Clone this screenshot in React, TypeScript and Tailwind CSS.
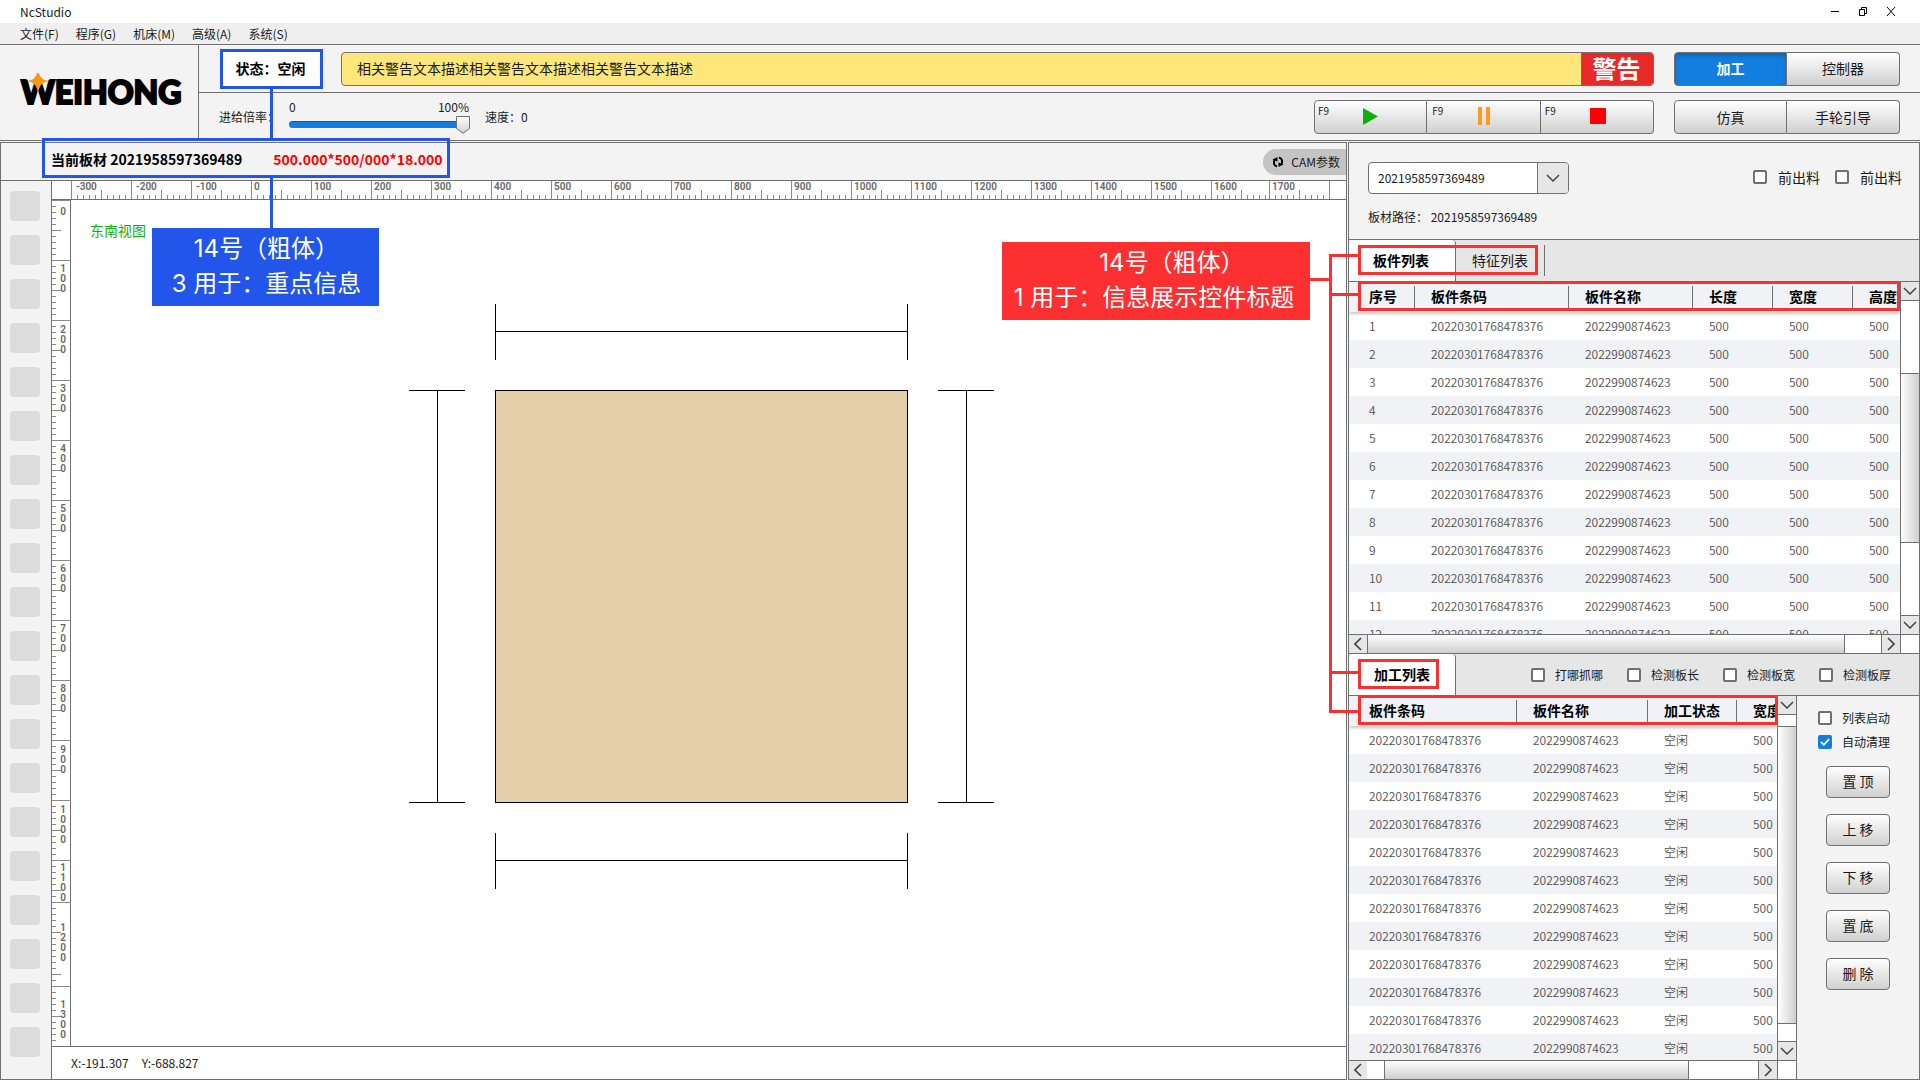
import React from "react";

const LINE = "border-[#707070]";

function Chevron({ dir }: { dir: "down" | "left" | "right" }) {
  if (dir === "down") {
    return (
      <svg width="14" height="8" viewBox="0 0 14 8" fill="none" stroke="#444" strokeWidth="1.5">
        <path d="M1 1l6 6 6-6" />
      </svg>
    );
  }
  return (
    <svg width="8" height="14" viewBox="0 0 8 14" fill="none" stroke="#444" strokeWidth="1.7">
      <path d={dir === "left" ? "M7 1L1 7l6 6" : "M1 1l6 6-6 6"} />
    </svg>
  );
}

function Check({ label, big = false, checked = false }: { label: string; big?: boolean; checked?: boolean }) {
  return (
    <label className={big ? "flex items-center gap-[11px] text-sm leading-5" : "flex items-center gap-2.5 text-xs leading-5"}>
      <span className="relative flex size-[14px]">
        <input
          type="checkbox"
          defaultChecked={checked}
          className="peer size-[14px] appearance-none rounded-xs border-2 border-[#707070] bg-white checked:border-[#127ee0] checked:bg-[#127ee0]"
        />
        <svg viewBox="0 0 14 14" className="pointer-events-none absolute inset-0 hidden peer-checked:block" fill="none" stroke="#fff" strokeWidth="1.8">
          <path d="M3 7l2.8 2.8L11.2 4.2" />
        </svg>
      </span>
      {label}
    </label>
  );
}

function VBar({ before, thumb, after }: { before: string; thumb: string; after: string }) {
  return (
    <div className={"flex w-[19px] shrink-0 flex-col border-l bg-white " + LINE}>
      <button aria-label="向上滚动" className={"flex h-[19px] shrink-0 items-center justify-center border-b bg-[#e6e6e6] " + LINE}>
        <Chevron dir="down" />
      </button>
      <div className={before} />
      <div className={"border-y bg-linear-to-r from-white to-[#cfcfcf] " + LINE + " " + thumb} />
      <div className={after} />
      <button aria-label="向下滚动" className={"flex h-[19px] shrink-0 items-center justify-center border-t bg-[#e6e6e6] " + LINE}>
        <Chevron dir="down" />
      </button>
    </div>
  );
}

function HBar({ before, thumb, after }: { before: string; thumb: string; after: string }) {
  return (
    <div className={"flex h-[19px] shrink-0 border-t bg-white " + LINE}>
      <button aria-label="向左滚动" className="flex w-[18px] shrink-0 items-center justify-center bg-[#e6e6e6]">
        <Chevron dir="left" />
      </button>
      <div className={before} />
      <div className={"border-x bg-linear-to-b from-white to-[#cfcfcf] " + LINE + " " + thumb} />
      <div className={after} />
      <button aria-label="向右滚动" className={"flex w-[19px] shrink-0 items-center justify-center border-l bg-[#e6e6e6] " + LINE}>
        <Chevron dir="right" />
      </button>
      <div className={"w-[19px] shrink-0 border-l " + LINE} />
    </div>
  );
}

function DataTable({ heads, cols, rows }: { heads: string[]; cols: string[]; rows: string[][] }) {
  return (
    <div className="min-w-0 flex-1 overflow-hidden bg-white">
      <table className="w-full table-fixed border-collapse">
        <colgroup>
          {cols.map((c, i) => (
            <col key={i} className={c} />
          ))}
        </colgroup>
        <thead className="relative bg-[#f0f2f5] shadow-[0_2px_3px_rgba(0,0,0,0.22)]">
          <tr className="h-[30px]">
            {heads.map((h, i) => (
              <th key={h} className="overflow-visible p-0 text-left text-sm font-bold whitespace-nowrap text-black">
                <div className={i ? "h-[22px] border-l border-[#707070] pl-4 leading-5" : "h-[22px] pl-5 leading-5"}>{h}</div>
              </th>
            ))}
          </tr>
        </thead>
        <tbody className="text-xs leading-4 font-[350] whitespace-nowrap text-[#505050]">
          {rows.map((r, i) => (
            <tr key={i} className={i % 2 ? "h-7 bg-[#f0f2f5]" : "h-7 bg-white"}>
              {r.map((c, j) => (
                <td key={j} className={j ? "p-0 pl-[17px]" : "p-0 pl-5"}>
                  {c}
                </td>
              ))}
            </tr>
          ))}
        </tbody>
      </table>
    </div>
  );
}

// Tick offsets from the left edge of the ruler; the last segment is slightly compressed.
const hx = (i: number) => (i < 200 ? 19 : 17) + i * 6;

function HRuler() {
  return (
    <svg className="block h-[19px] w-full bg-white" aria-hidden="true">
      <path d="M0 18.5H4000" stroke="#707070" />
      {Array.from({ length: 211 }, (_, i) => (
        <path key={i} d={`M${hx(i) + 0.5} ${i % 10 === 0 ? 0 : i % 5 === 0 ? 9 : 14}V18`} stroke="#8a8a8a" />
      ))}
      {Array.from({ length: 21 }, (_, k) => (
        <text key={k} x={hx(k * 10) + (k < 3 ? 5 : 3)} y="9" fontSize="10" fontWeight="600" fill="#666" fontFamily="Roboto">
          {k * 100 - 300}
        </text>
      ))}
    </svg>
  );
}

const V_MAJOR = [0, 60, 120, 180, 240, 300, 360, 420, 480, 540, 600, 660, 702, 786];
const V_MEDIUM = [30, 90, 150, 210, 270, 330, 390, 450, 510, 570, 630, 690, 732, 774, 816];
const V_LABELS: [string, number][] = [
  ["0", 15], ["100", 72], ["200", 133], ["300", 192], ["400", 252], ["500", 312], ["600", 372],
  ["700", 432], ["800", 492], ["900", 553], ["1000", 613], ["1100", 671], ["1200", 731], ["1300", 808],
];

function VRuler() {
  return (
    <svg className="block h-full w-5 shrink-0" aria-hidden="true">
      <path d="M18.5 0V4000" stroke="#707070" />
      {Array.from({ length: 141 }, (_, i) => i * 6).map((y) => (
        <path key={y} d={`M0 ${y + 0.5}H${V_MAJOR.includes(y) ? 19 : V_MEDIUM.includes(y) ? 9 : 4}`} stroke="#8a8a8a" />
      ))}
      {V_LABELS.map(([t, y]) =>
        t.split("").map((ch, i) => (
          <text key={t + i} x="11" y={y + i * 10} textAnchor="middle" fontSize="10" fontWeight="600" fill="#666" fontFamily="Roboto">
            {ch}
          </text>
        ))
      )}
    </svg>
  );
}

function Logo() {
  return (
    <svg width="170" height="40" viewBox="0 0 170 40" role="img" aria-label="WEIHONG">
      <text x="1" y="31" fontFamily="Lato" fontWeight="900" fontSize="32" fill="#000" stroke="#000" strokeWidth="2">
        WEIHONG
      </text>
      <path d="M18 -4 Q19 7 29 8 Q19 9 18 21 Q17 9 7 8 Q17 7 18 -4Z" fill="#f39a12" />
    </svg>
  );
}

const SEG = "h-[34px] border border-[#707070] text-sm bg-linear-to-b from-white to-[#d0d0d0]";

const partRows = Array.from({ length: 12 }, (_, i) => [String(i + 1), "20220301768478376", "2022990874623", "500", "500", "500"]);
const workRows = Array.from({ length: 12 }, () => ["20220301768478376", "2022990874623", "空闲", "500"]);

export default function App() {
  return (
    <div className="relative flex h-screen min-h-[1080px] w-full flex-col overflow-hidden bg-[#f3f3f3] font-['Noto_Sans_CJK_SC',sans-serif] text-xs text-[#1a1a1a]">
      <div className="flex h-[23px] shrink-0 items-center justify-between bg-white pr-[23px] pl-5">
        <span className="leading-[23px]">NcStudio</span>
        <div className="flex items-center gap-4">
          <button aria-label="最小化" className="flex size-3 items-center justify-center">
            <svg width="12" height="12" stroke="#000"><path d="M2 5.500h8" /></svg>
          </button>
          <button aria-label="还原" className="flex size-3 items-center justify-center">
            <svg width="12" height="12" stroke="#000" fill="none"><path d="M2.500 3.500h5v6h-5zM4.500 3V1.500h5v6H8" /></svg>
          </button>
          <button aria-label="关闭" className="flex size-3 items-center justify-center">
            <svg width="12" height="12" stroke="#000" fill="none"><path d="M2 1l8 9M10 1l-8 9" /></svg>
          </button>
        </div>
      </div>
      <nav className={"flex h-[22px] shrink-0 items-center gap-[17px] border-b bg-[#efefef] pl-5 leading-[22px] " + LINE}>
        {["文件(F)", "程序(G)", "机床(M)", "高级(A)", "系统(S)"].map((m) => (
          <button key={m}>{m}</button>
        ))}
      </nav>

      <header className={"flex h-24 shrink-0 border-b " + LINE}>
        <div className={"flex w-[199px] shrink-0 items-center border-r pl-5 " + LINE}>
          <Logo />
        </div>
        <div className="flex min-w-0 flex-1 flex-col">
          <div className={"flex h-12 items-center border-b pr-5 pl-[21px] " + LINE}>
            <div className="flex h-10 w-[103px] shrink-0 items-center justify-center border-3 border-[#2256eb] bg-white pr-0.5 pb-0.5 text-sm font-bold text-black">
              状态：空闲
            </div>
            <div className={"ml-[18px] flex h-[34px] flex-1 items-center overflow-hidden rounded-[4px] border bg-[#ffe67a] " + LINE}>
              <span className="flex-1 pb-0.5 pl-[15px] text-sm">相关警告文本描述相关警告文本描述相关警告文本描述</span>
              <strong className="flex h-full w-[72px] items-center justify-center border-l border-[#707070] bg-[#e92828] pr-0.5 pb-0.5 text-2xl leading-8 text-white">警告</strong>
            </div>
            <div className="ml-5 grid w-[226px] grid-cols-2">
              <button className="h-[34px] rounded-l-[4px] border border-[#707070] bg-[#127ee0] pb-0.5 text-sm font-bold text-white shadow-[inset_0_3px_4px_rgba(0,0,0,0.2)]">加工</button>
              <button className={SEG + " rounded-r-[4px] border-l-0 pb-0.5"}>控制器</button>
            </div>
          </div>
          <div className="flex flex-1 items-center pr-5 pl-5">
            <label htmlFor="feed" className="w-[70px]">进给倍率：</label>
            <div className="relative w-[181px] pb-0.5">
              <div className="flex justify-between pt-px leading-4">
                <span>0</span>
                <span className="pr-px">100%</span>
              </div>
              <div className="flex h-[19px] items-center">
                <div className="h-[7px] w-[174px] rounded-full border-t border-[#0b5ea9] bg-[#127ee0]" />
              </div>
              <svg width="14" height="19" viewBox="0 0 14 19" className="absolute right-0 bottom-0.5">
                <defs>
                  <linearGradient id="thumb" x1="0" y1="0" x2="0" y2="1">
                    <stop offset="0" stopColor="#fff" />
                    <stop offset="1" stopColor="#cfcfcf" />
                  </linearGradient>
                </defs>
                <path d="M.5 1.500h13v12L7 18.300.5 13.500z" fill="url(#thumb)" stroke="#707070" />
              </svg>
              <input id="feed" type="range" defaultValue={100} className="absolute inset-x-0 bottom-0 h-5 opacity-0" />
            </div>
            <span className="ml-[15px]">速度：0</span>
            <div className="ml-auto grid w-[340px] grid-cols-3">
              <button className={SEG + " flex items-center rounded-l-[4px]"}>
                <span className="mb-2.5 w-12 pl-[3px] text-left text-[10px]">F9</span>
                <svg width="16" height="18"><path d="M0 0l15 8.500-15 8.500z" fill="#0bb20c" /></svg>
              </button>
              <button className={SEG + " flex items-center border-l-0"}>
                <span className="mb-2.5 w-[51px] pl-[5px] text-left text-[10px]">F9</span>
                <svg width="12" height="18" className="mb-0.5"><path d="M0 0h4v18H0zM8 0h4v18H8z" fill="#ff9a1e" /></svg>
              </button>
              <button className={SEG + " flex items-center rounded-r-[4px] border-l-0"}>
                <span className="mb-2.5 w-[49px] pl-1 text-left text-[10px]">F9</span>
                <span className="mb-0.5 size-4 bg-[#ff0000]" />
              </button>
            </div>
            <div className="ml-5 grid w-[226px] grid-cols-2">
              <button className={SEG + " rounded-l-[4px]"}>仿真</button>
              <button className={SEG + " rounded-r-[4px] border-l-0"}>手轮引导</button>
            </div>
          </div>
        </div>
      </header>

      <div className="flex min-h-0 flex-1 gap-px pt-px">
        <main className={"flex min-w-0 flex-1 flex-col border " + LINE}>
          <div className={"flex h-[38px] shrink-0 items-center border-b pl-[50px] text-sm font-bold " + LINE}>
            <span className="pb-[5px] text-black">当前板材 2021958597369489</span>
            <span className="ml-[31px] pb-[5px] text-[#ff0000]">500.000*500/000*18.000</span>
            <button className="ml-auto flex h-[26px] items-center gap-1.5 rounded-l-full bg-[#c4c4c4] pr-1.5 pl-2 text-xs font-normal">
              <svg width="14" height="12" viewBox="0 0 14 12" fill="none" stroke="#000" strokeWidth="2">
                <path d="M6 10.500C2.500 9.500 2 6 4 3" />
                <path d="M8 1.500C11.500 2.500 12 6 10 9" />
                <path d="M1.500 3.800L6.500 1v4.500zM12.500 8.200L7.500 11V6.500z" fill="#000" stroke="none" />
              </svg>
              CAM参数
            </button>
          </div>
          <div className="flex min-h-0 flex-1">
            <aside className={"flex w-[51px] shrink-0 flex-col gap-[14px] border-r pt-2.5 pl-[9px] " + LINE}>
              {Array.from({ length: 20 }, (_, i) => (
                <button key={i} aria-label={"工具 " + (i + 1)} className="size-[30px] shrink-0 rounded-[4px] bg-[#dcdcdc]" />
              ))}
            </aside>
            <div className="flex min-w-0 flex-1 flex-col bg-white">
              <HRuler />
              <div className="flex min-h-0 flex-1 overflow-hidden">
                <VRuler />
                <div className="relative min-w-0 flex-1">
                  <svg className="block size-full" fill="none" stroke="#000" role="img" aria-label="板材">
                    <rect x="423.500" y="190.500" width="412" height="412" fill="#e5ceaa" />
                    <path d="M423.500 104v56M835.500 104v56M423.500 131.500h412" />
                    <path d="M423.500 633v56M835.500 633v56M423.500 660.500h412" />
                    <path d="M337 190.500h56M337 602.500h56M365.500 190.500v412" />
                    <path d="M866 190.500h56M866 602.500h56M894.500 190.500v412" />
                  </svg>
                  <span className="absolute top-5 left-[18px] text-sm text-[#0bb20c]">东南视图</span>
                </div>
              </div>
              <footer className={"flex h-[33px] shrink-0 items-center gap-[13px] border-t pl-[19px] " + LINE}>
                <span>X:-191.307</span>
                <span>Y:-688.827</span>
              </footer>
            </div>
          </div>
        </main>

        <section className={"flex w-[572px] shrink-0 flex-col border " + LINE}>
          <div className="h-24 shrink-0 pt-[19px] pr-[17px] pl-[19px]">
            <div className="flex items-center justify-between">
              <div className="relative w-[201px]">
                <select aria-label="板材" className={"block h-8 w-full appearance-none rounded-[4px] border bg-white pl-[9px] text-xs " + LINE}>
                  <option>2021958597369489</option>
                </select>
                <span className={"pointer-events-none absolute inset-y-px right-px flex w-[31px] items-center justify-center rounded-r-[3px] border-l bg-[#e6e6e6] " + LINE}>
                  <Chevron dir="down" />
                </span>
              </div>
              <div className="flex gap-[15px] pb-0.5">
                <Check big label="前出料" />
                <Check big label="前出料" />
              </div>
            </div>
            <p className="mt-[13px] leading-5">板材路径： 2021958597369489</p>
          </div>

          <div role="tablist" className={"flex h-[43px] shrink-0 border-y bg-[#e6e6e6] text-sm " + LINE}>
            <button role="tab" aria-selected="true" className={"w-[107px] rounded-t-[4px] border-r bg-white pr-0.5 pb-0.5 font-bold text-black " + LINE}>板件列表</button>
            <button role="tab" aria-selected="false" className={"my-[5px] w-[89px] border-r pb-0.5 text-center " + LINE}>特征列表</button>
          </div>
          <div className="flex h-[352px] shrink-0">
            <DataTable
              heads={["序号", "板件条码", "板件名称", "长度", "宽度", "高度"]}
              cols={["w-[65px]", "w-[154px]", "w-[124px]", "w-[80px]", "w-[80px]", "w-auto"]}
              rows={partRows}
            />
            <VBar before="flex-[73]" thumb="flex-[170]" after="flex-[73]" />
          </div>
          <HBar before="" thumb="flex-[477]" after="flex-[36]" />

          <div className={"flex h-[43px] shrink-0 items-center border-y bg-[#e6e6e6] pr-7 " + LINE}>
            <h2 className={"flex h-full w-[107px] items-center justify-center rounded-t-[4px] border-r bg-white pb-0.5 text-sm font-bold text-black " + LINE}>加工列表</h2>
            <div className="ml-auto flex gap-6">
              <Check label="打哪抓哪" />
              <Check label="检测板长" />
              <Check label="检测板宽" />
              <Check label="检测板厚" />
            </div>
          </div>
          <div className="flex min-h-0 flex-1">
            <div className={"flex min-w-0 flex-1 flex-col border-r " + LINE}>
              <div className="flex min-h-0 flex-1">
                <DataTable
                  heads={["板件条码", "板件名称", "加工状态", "宽度"]}
                  cols={["w-[167px]", "w-[131px]", "w-[89px]", "w-auto"]}
                  rows={workRows}
                />
                <VBar before="flex-[11]" thumb="flex-[299]" after="flex-[17]" />
              </div>
              <HBar before="flex-[17]" thumb="flex-[305]" after="flex-[69]" />
            </div>
            <div className="flex w-[122px] shrink-0 flex-col pt-3 pl-[21px]">
              <div className="flex flex-col gap-1">
                <Check label="列表启动" />
                <Check label="自动清理" checked />
              </div>
              <div className="mt-3.5 ml-2 flex flex-col gap-4">
                {["置 顶", "上 移", "下 移", "置 底", "删 除"].map((b) => (
                  <button key={b} className="h-8 w-16 rounded-[4px] border border-[#707070] bg-linear-to-b from-white to-[#d0d0d0] pb-0.5 text-sm">
                    {b}
                  </button>
                ))}
              </div>
            </div>
          </div>
        </section>
      </div>

      {/* Blue callout: key information */}
      <div className="pointer-events-none absolute top-[138px] left-[42px] h-10 w-[408px] border-3 border-[#2256eb]" />
      <div className="pointer-events-none absolute top-[88px] left-[270px] h-[50px] w-[3px] bg-[#2256eb]" />
      <div className="pointer-events-none absolute top-[178px] left-[270px] h-[50px] w-[3px] bg-[#2256eb]" />
      <div className="absolute top-[228px] left-[152px] h-[78px] w-[227px] bg-[#2256eb] pt-[3px] pl-0.5 text-center font-['Inter','Noto_Sans_CJK_SC',sans-serif] text-2xl leading-[35px] text-white">
        <p>14号（粗体）</p>
        <p>3 用于：重点信息</p>
      </div>

      {/* Red callout: titles of information controls */}
      <div className="absolute top-[242px] right-[610px] h-[78px] w-[308px] bg-[#fc3030] pt-[3px] pr-1 text-center font-['Inter','Noto_Sans_CJK_SC',sans-serif] text-2xl leading-[35px] text-white">
        <p className="pl-9">14号（粗体）</p>
        <p>1 用于：信息展示控件标题</p>
      </div>
      <div className="pointer-events-none absolute top-[278px] right-[590px] h-[3px] w-5 bg-[#fc3030]" />
      <div className="pointer-events-none absolute top-[254px] right-[562px] h-[42px] w-[29px] border-3 border-r-0 border-[#fc3030]" />
      <div className="pointer-events-none absolute top-[293px] right-[562px] h-[420px] w-[29px] border-3 border-r-0 border-[#fc3030]" />
      <div className="pointer-events-none absolute top-[671px] right-[562px] h-[3px] w-[29px] bg-[#fc3030]" />
      <div className="pointer-events-none absolute top-[245px] right-[382px] h-[30px] w-[180px] border-3 border-[#fc3030]" />
      <div className="pointer-events-none absolute top-[281px] right-5 h-[30px] w-[542px] border-3 border-[#fc3030]" />
      <div className="pointer-events-none absolute top-[659px] right-[481px] h-[30px] w-[81px] border-3 border-[#fc3030]" />
      <div className="pointer-events-none absolute top-[695px] right-[142px] h-[30px] w-[420px] border-3 border-[#fc3030]" />
    </div>
  );
}
